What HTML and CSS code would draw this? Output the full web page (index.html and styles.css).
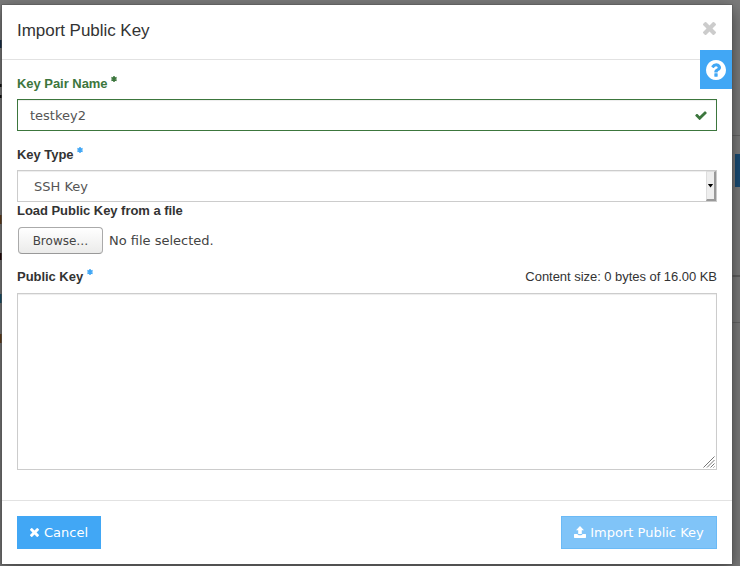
FILE: index.html
```html
<!DOCTYPE html>
<html lang="en">
<head>
<meta charset="utf-8">
<title>Import Public Key</title>
<link rel="stylesheet" href="styles.css">
</head>
<body>
<svg class="defs" width="0" height="0" aria-hidden="true">
  <symbol id="times" viewBox="110 366 1188 1188"><path d="M1298 1322q0 40-28 68l-136 136q-28 28-68 28t-68-28l-294-294-294 294q-28 28-68 28t-68-28l-136-136q-28-28-28-68t28-68l294-294-294-294q-28-28-28-68t28-68l136-136q28-28 68-28t68 28l294 294 294-294q28-28 68-28t68 28l136 136q28 28 28 68t-28 68l-294 294 294 294q28 28 28 68z"/></symbol>
</svg>
<div class="modal">
  <header class="modal-header">
    <h1>Import Public Key</h1>
    <svg class="close" viewBox="0 0 14 14"><use href="#times"/></svg>
  </header>
  <div class="help"><svg viewBox="128 128 1536 1536"><path d="M1024 1376v-192q0-14-9-23t-23-9h-192q-14 0-23 9t-9 23v192q0 14 9 23t23 9h192q14 0 23-9t9-23zm256-672q0-88-55.500-163t-138.500-116-170-41q-243 0-371 213-15 24 8 42l132 100q7 6 19 6 16 0 25-12 53-68 86-92 34-24 86-24 48 0 85.500 26t37.500 59q0 38-20 61t-68 45q-63 28-115.500 86.500t-52.500 125.500v36q0 14 9 23t23 9h192q14 0 23-9t9-23q0-19 21.500-49.500t54.500-49.500q32-18 49-28.500t46-35 44.500-48 28-60.500 12.500-81zm384 192q0 209-103 385.500t-279.500 279.500-385.500 103-385.500-103-279.500-279.500-103-385.500 103-385.500 279.500-279.500 385.500-103 385.500 103 279.500 279.500 103 385.500z"/></svg></div>
  <main class="modal-body">
    <div class="label-row valid"><span class="label">Key Pair Name</span><svg class="star" viewBox="0 0 6 6"><path d="M3 0v6M.4 1.500l5.200 3M5.600 1.500l-5.200 3"/></svg></div>
    <div class="field valid-field"><span>testkey2</span><svg class="check" viewBox="121 306 1550 1216"><path d="M1671 566q0 40-28 68l-724 724-136 136q-28 28-68 28t-68-28l-136-136-362-362q-28-28-28-68t28-68l136-136q28-28 68-28t68 28l294 295 656-657q28-28 68-28t68 28l136 136q28 28 28 68z"/></svg></div>
    <div class="label-row type-label"><span class="label">Key Type</span><svg class="star" viewBox="0 0 6 6"><path d="M3 0v6M.4 1.500l5.200 3M5.600 1.500l-5.200 3"/></svg></div>
    <div class="field select"><span>SSH Key</span><i class="drop"></i></div>
    <div class="label-row file-label"><span class="label">Load Public Key from a file</span></div>
    <div class="file"><span class="browse">Browse…</span><span>No file selected.</span></div>
    <div class="label-row key-label"><span class="label">Public Key</span><svg class="star" viewBox="0 0 6 6"><path d="M3 0v6M.4 1.500l5.200 3M5.600 1.500l-5.200 3"/></svg><span class="size">Content size: 0 bytes of 16.00 KB</span></div>
    <div class="textarea"><svg viewBox="0 0 12 12"><path d="M.5 11.500l11-11M4 11.500l7.500-7.500M7.500 11.500l4-4M10.500 11.500l1-1"/></svg></div>
  </main>
  <footer class="modal-footer">
    <div class="btn cancel"><svg viewBox="0 0 9 9"><use href="#times"/></svg><span>Cancel</span></div>
    <div class="btn import"><svg viewBox="0 0 12 12"><path d="M6 0l4 4.300H7.800V8H4.200V4.300H2zM.6 8H3.400Q4 9.200 5 9.200H7Q8 9.200 8.600 8H11.400Q12 8 12 8.600V11.300Q12 12 11.400 12H.6Q0 12 0 11.300V8.600Q0 8 .6 8z"/></svg><span>Import Public Key</span></div>
  </footer>
</div>
</body>
</html>
```
FILE: styles.css
```css
* { box-sizing: border-box; }
body {
  margin: 0;
  width: 740px;
  height: 566px;
  padding: 5px 8px 2px 2px;
  overflow: hidden;
  font: 13px/18px "DejaVu Sans", sans-serif;
  color: #555;
  background:
    linear-gradient(#194b73, #194b73) 735px 154px / 5px 33px no-repeat,
    linear-gradient(#656565, #656565) 732px 135px / 8px 1px no-repeat,
    linear-gradient(#5f5f5f, #5f5f5f) 732px 275px / 8px 2px no-repeat,
    linear-gradient(#656565, #656565) 732px 322px / 8px 1px no-repeat,
    linear-gradient(#18304b, #18304b) 0 40px / 2px 8px no-repeat,
    linear-gradient(#111, #111) 0 84px / 2px 3px no-repeat,
    linear-gradient(#111, #111) 0 95px / 2px 3px no-repeat,
    linear-gradient(#65401d, #65401d) 0 215px / 2px 9px no-repeat,
    linear-gradient(#260b0b, #260b0b) 0 253px / 2px 7px no-repeat,
    linear-gradient(#1b536d, #1b536d) 0 294px / 2px 9px no-repeat,
    linear-gradient(#65401d, #65401d) 0 334px / 2px 9px no-repeat,
    #7b7b7b;
}
.defs { position: absolute; }
svg { display: block; fill: currentColor; flex: none; }
.modal {
  position: relative;
  width: 730px;
  height: 559px;
  background: #fff;
  box-shadow: 0 0 0 .5px #555, 0 5px 15px rgba(0, 0, 0, .5);
}
.modal-header {
  display: flex;
  justify-content: space-between;
  height: 55px;
  padding: 14px 16px 0 15px;
  border-bottom: 1px solid #e2e2e2;
}
h1 {
  margin: 0;
  font: 400 17px/24px "Liberation Sans", sans-serif;
  letter-spacing: -.04px;
  color: #333;
}
.close { width: 13px; height: 13px; margin-top: 3px; color: #ccc; }
.help {
  position: absolute;
  top: 45px;
  right: 0;
  display: grid;
  place-items: center;
  width: 32px;
  height: 39px;
  color: #fff;
  background: #41a7f5;
}
.help svg { width: 20px; height: 20px; }
.modal-body { height: 440px; padding: 14px 15px 0; }
.label-row {
  display: flex;
  height: 20px;
  font: 13px/20px "Liberation Sans", sans-serif;
  letter-spacing: -.04px;
  color: #333;
}
.label { font-weight: 700; }
.star {
  width: 6px;
  height: 6px;
  margin: 2px 0 0 3.5px;
  fill: none;
  stroke: #41a7f5;
  stroke-width: 1.5;
}
.label-row.valid { color: #3c763d; }
.valid .star { margin-top: 2px; stroke: #3c763d; }
.field {
  display: flex;
  align-items: center;
  justify-content: space-between;
  height: 32px;
  border: 1px solid #ccc;
  box-shadow: inset 0 1px 1px rgba(0, 0, 0, .075);
}
.field span { padding-top: 2px; }
.valid-field { margin-top: 5px; padding: 0 9px 0 12px; border-color: #3c763d; }
.check { width: 12px; height: 9px; color: #3c763d; }
.type-label { margin-top: 14px; }
.select { margin-top: 5px; padding-left: 16px; }
.drop {
  display: grid;
  place-items: center;
  width: 10px;
  height: 30px;
  background: #eee;
  border: solid;
  border-width: 1px 2px 2px 1px;
  border-color: #ddd #999 #999 #ddd;
}
.drop::before {
  content: "";
  width: 6px;
  height: 4px;
  background: #000;
  clip-path: polygon(0 0, 100% 0, 50% 100%);
}
.file-label { margin-top: -1px; }
.file {
  display: flex;
  align-items: center;
  gap: 6px;
  margin: 6px 0 0 1px;
  color: #444;
}
.browse {
  width: 85px;
  height: 27px;
  border: 1px solid #aaa;
  border-bottom-color: #999;
  border-radius: 4px;
  background: linear-gradient(#fff, #ebebea);
  font-size: 12px;
  line-height: 26px;
  text-align: center;
}
.key-label { margin-top: 13px; }
.size { margin-left: auto; }
.textarea {
  display: flex;
  align-items: flex-end;
  justify-content: flex-end;
  height: 177px;
  margin-top: 6px;
  padding: 1px;
  border: 1px solid #ccc;
  box-shadow: inset 0 1px 1px rgba(0, 0, 0, .075);
}
.textarea svg { width: 12px; height: 12px; stroke: #666; stroke-width: .9; }
.modal-footer {
  display: flex;
  justify-content: space-between;
  height: 64px;
  padding: 15px;
  border-top: 1px solid #e2e2e2;
}
.btn {
  display: flex;
  align-items: center;
  justify-content: center;
  height: 33px;
  color: #fff;
  background: #41a7f5;
}
.cancel { width: 84px; gap: 5px; }
.cancel svg { width: 9px; height: 9px; }
.import { width: 156px; gap: 4px; background: #80c4f8; border: 1px solid #6bbaf6; }
.import svg { width: 12px; height: 12px; margin-bottom: 1px; }
```
